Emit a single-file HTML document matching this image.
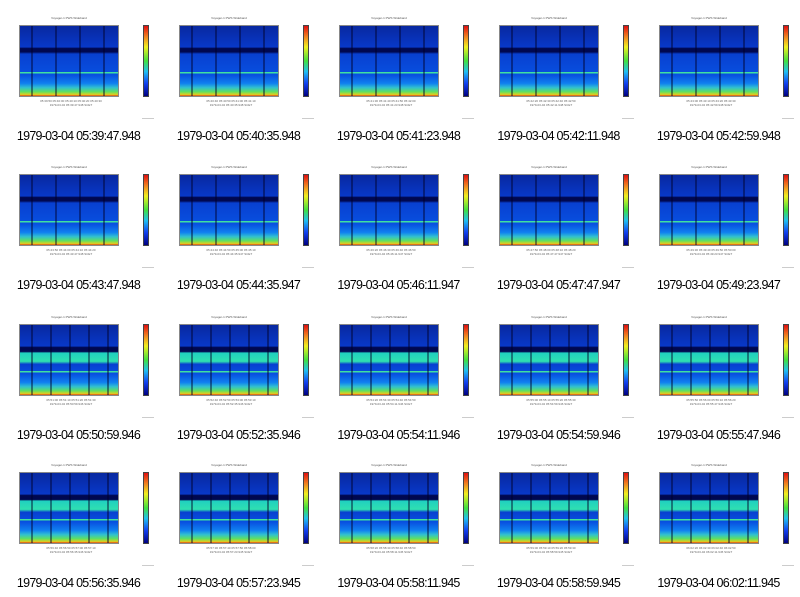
<!DOCTYPE html>
<html><head><meta charset="utf-8"><style>
body{margin:0;width:800px;height:596px;background:#fff;position:relative;overflow:hidden;font-family:"Liberation Sans",sans-serif}
.c{position:absolute;width:160px;height:150px}
.t{position:absolute;left:19px;top:16px;width:100px;text-align:center;font-size:3px;color:#555}
.p{position:absolute;left:19px;top:25px;width:100px;height:72px;border:1px solid #888;box-sizing:border-box;
background:
repeating-linear-gradient(90deg,transparent 0 11px,rgba(0,0,40,.45) 11px 13px,transparent 13px 24px),
linear-gradient(180deg,transparent 0 66%,#40e0a0 66% 68%,transparent 68%),
linear-gradient(180deg,#0828a0 0%,#0838c8 30%,#000850 32%,#000850 37%,#0840d0 40%,#0850e0 70%,#1080f0 82%,#30c0d0 88%,#60e060 94%,#e0d020 98%,#e04010 100%)}
.r2 .p,.r3 .p{background:
repeating-linear-gradient(90deg,transparent 0 11px,rgba(0,0,40,.45) 11px 13px,transparent 13px 19px),
linear-gradient(180deg,transparent 0 66%,#40e0a0 66% 68%,transparent 68%),
linear-gradient(180deg,#0828a0 0%,#0838c8 30%,#000850 32%,#000850 38%,#20d0c0 40%,#30e0b0 52%,#0840d0 56%,#0850e0 70%,#1080f0 82%,#30c0d0 88%,#60e060 94%,#e0d020 98%,#e04010 100%)}
.x{position:absolute;left:19px;top:99px;width:104px;font-size:3px;color:#666;line-height:4px;text-align:center}
.b{position:absolute;left:143px;top:25px;width:6px;height:72px;border:1px solid #444;box-sizing:border-box;background:linear-gradient(180deg,#e01010,#f08020 15%,#f0f020 30%,#40e040 50%,#20c0f0 65%,#1040f0 82%,#000080)}
.cap{position:absolute;left:0;top:129px;width:157px;text-align:center;font-size:12.5px;letter-spacing:-0.75px;color:#000;white-space:nowrap}
.s{position:absolute;left:142px;top:118px;width:12px;height:1px;background:#ccc}
</style></head><body>
<div class="r0">
<div class="c" style="left:0;top:0"><div class="t">Voyager-1 PWS Wideband</div><div class="p"></div><div class="b"></div><div class="x">05:39:50 05:40:00 05:40:10 05:40:20 05:40:30<br>1979-03-04 05:39:47.948 SCET</div><div class="s"></div><div class="cap">1979-03-04 05:39:47.948</div></div>
<div class="c" style="left:160px;top:0"><div class="t">Voyager-1 PWS Wideband</div><div class="p"></div><div class="b"></div><div class="x">05:40:40 05:40:50 05:41:00 05:41:10<br>1979-03-04 05:40:35.948 SCET</div><div class="s"></div><div class="cap">1979-03-04 05:40:35.948</div></div>
<div class="c" style="left:320px;top:0"><div class="t">Voyager-1 PWS Wideband</div><div class="p"></div><div class="b"></div><div class="x">05:41:30 05:41:40 05:41:50 05:42:00<br>1979-03-04 05:41:23.948 SCET</div><div class="s"></div><div class="cap">1979-03-04 05:41:23.948</div></div>
<div class="c" style="left:480px;top:0"><div class="t">Voyager-1 PWS Wideband</div><div class="p"></div><div class="b"></div><div class="x">05:42:20 05:42:30 05:42:40 05:42:50<br>1979-03-04 05:42:11.948 SCET</div><div class="s"></div><div class="cap">1979-03-04 05:42:11.948</div></div>
<div class="c" style="left:640px;top:0"><div class="t">Voyager-1 PWS Wideband</div><div class="p"></div><div class="b"></div><div class="x">05:43:00 05:43:10 05:43:20 05:43:30<br>1979-03-04 05:42:59.948 SCET</div><div class="s"></div><div class="cap">1979-03-04 05:42:59.948</div></div>
</div>
<div class="r1">
<div class="c" style="left:0;top:149px"><div class="t">Voyager-1 PWS Wideband</div><div class="p"></div><div class="b"></div><div class="x">05:43:50 05:44:00 05:44:10 05:44:20<br>1979-03-04 05:43:47.948 SCET</div><div class="s"></div><div class="cap">1979-03-04 05:43:47.948</div></div>
<div class="c" style="left:160px;top:149px"><div class="t">Voyager-1 PWS Wideband</div><div class="p"></div><div class="b"></div><div class="x">05:44:40 05:44:50 05:45:00 05:45:10<br>1979-03-04 05:44:35.947 SCET</div><div class="s"></div><div class="cap">1979-03-04 05:44:35.947</div></div>
<div class="c" style="left:320px;top:149px"><div class="t">Voyager-1 PWS Wideband</div><div class="p"></div><div class="b"></div><div class="x">05:46:20 05:46:30 05:46:40 05:46:50<br>1979-03-04 05:46:11.947 SCET</div><div class="s"></div><div class="cap">1979-03-04 05:46:11.947</div></div>
<div class="c" style="left:480px;top:149px"><div class="t">Voyager-1 PWS Wideband</div><div class="p"></div><div class="b"></div><div class="x">05:47:50 05:48:00 05:48:10 05:48:20<br>1979-03-04 05:47:47.947 SCET</div><div class="s"></div><div class="cap">1979-03-04 05:47:47.947</div></div>
<div class="c" style="left:640px;top:149px"><div class="t">Voyager-1 PWS Wideband</div><div class="p"></div><div class="b"></div><div class="x">05:49:30 05:49:40 05:49:50 05:50:00<br>1979-03-04 05:49:23.947 SCET</div><div class="s"></div><div class="cap">1979-03-04 05:49:23.947</div></div>
</div>
<div class="r2">
<div class="c" style="left:0;top:299px"><div class="t">Voyager-1 PWS Wideband</div><div class="p"></div><div class="b"></div><div class="x">05:51:00 05:51:10 05:51:20 05:51:30<br>1979-03-04 05:50:59.946 SCET</div><div class="s"></div><div class="cap">1979-03-04 05:50:59.946</div></div>
<div class="c" style="left:160px;top:299px"><div class="t">Voyager-1 PWS Wideband</div><div class="p"></div><div class="b"></div><div class="x">05:52:40 05:52:50 05:53:00 05:53:10<br>1979-03-04 05:52:35.946 SCET</div><div class="s"></div><div class="cap">1979-03-04 05:52:35.946</div></div>
<div class="c" style="left:320px;top:299px"><div class="t">Voyager-1 PWS Wideband</div><div class="p"></div><div class="b"></div><div class="x">05:54:20 05:54:30 05:54:40 05:54:50<br>1979-03-04 05:54:11.946 SCET</div><div class="s"></div><div class="cap">1979-03-04 05:54:11.946</div></div>
<div class="c" style="left:480px;top:299px"><div class="t">Voyager-1 PWS Wideband</div><div class="p"></div><div class="b"></div><div class="x">05:55:00 05:55:10 05:55:20 05:55:30<br>1979-03-04 05:54:59.946 SCET</div><div class="s"></div><div class="cap">1979-03-04 05:54:59.946</div></div>
<div class="c" style="left:640px;top:299px"><div class="t">Voyager-1 PWS Wideband</div><div class="p"></div><div class="b"></div><div class="x">05:55:50 05:56:00 05:56:10 05:56:20<br>1979-03-04 05:55:47.946 SCET</div><div class="s"></div><div class="cap">1979-03-04 05:55:47.946</div></div>
</div>
<div class="r3">
<div class="c" style="left:0;top:447px"><div class="t">Voyager-1 PWS Wideband</div><div class="p"></div><div class="b"></div><div class="x">05:56:40 05:56:50 05:57:00 05:57:10<br>1979-03-04 05:56:35.946 SCET</div><div class="s"></div><div class="cap">1979-03-04 05:56:35.946</div></div>
<div class="c" style="left:160px;top:447px"><div class="t">Voyager-1 PWS Wideband</div><div class="p"></div><div class="b"></div><div class="x">05:57:30 05:57:40 05:57:50 05:58:00<br>1979-03-04 05:57:23.945 SCET</div><div class="s"></div><div class="cap">1979-03-04 05:57:23.945</div></div>
<div class="c" style="left:320px;top:447px"><div class="t">Voyager-1 PWS Wideband</div><div class="p"></div><div class="b"></div><div class="x">05:58:20 05:58:30 05:58:40 05:58:50<br>1979-03-04 05:58:11.945 SCET</div><div class="s"></div><div class="cap">1979-03-04 05:58:11.945</div></div>
<div class="c" style="left:480px;top:447px"><div class="t">Voyager-1 PWS Wideband</div><div class="p"></div><div class="b"></div><div class="x">05:59:00 05:59:10 05:59:20 05:59:30<br>1979-03-04 05:58:59.945 SCET</div><div class="s"></div><div class="cap">1979-03-04 05:58:59.945</div></div>
<div class="c" style="left:640px;top:447px"><div class="t">Voyager-1 PWS Wideband</div><div class="p"></div><div class="b"></div><div class="x">06:02:20 06:02:30 06:02:40 06:02:50<br>1979-03-04 06:02:11.945 SCET</div><div class="s"></div><div class="cap">1979-03-04 06:02:11.945</div></div>
</div>
</body></html>
